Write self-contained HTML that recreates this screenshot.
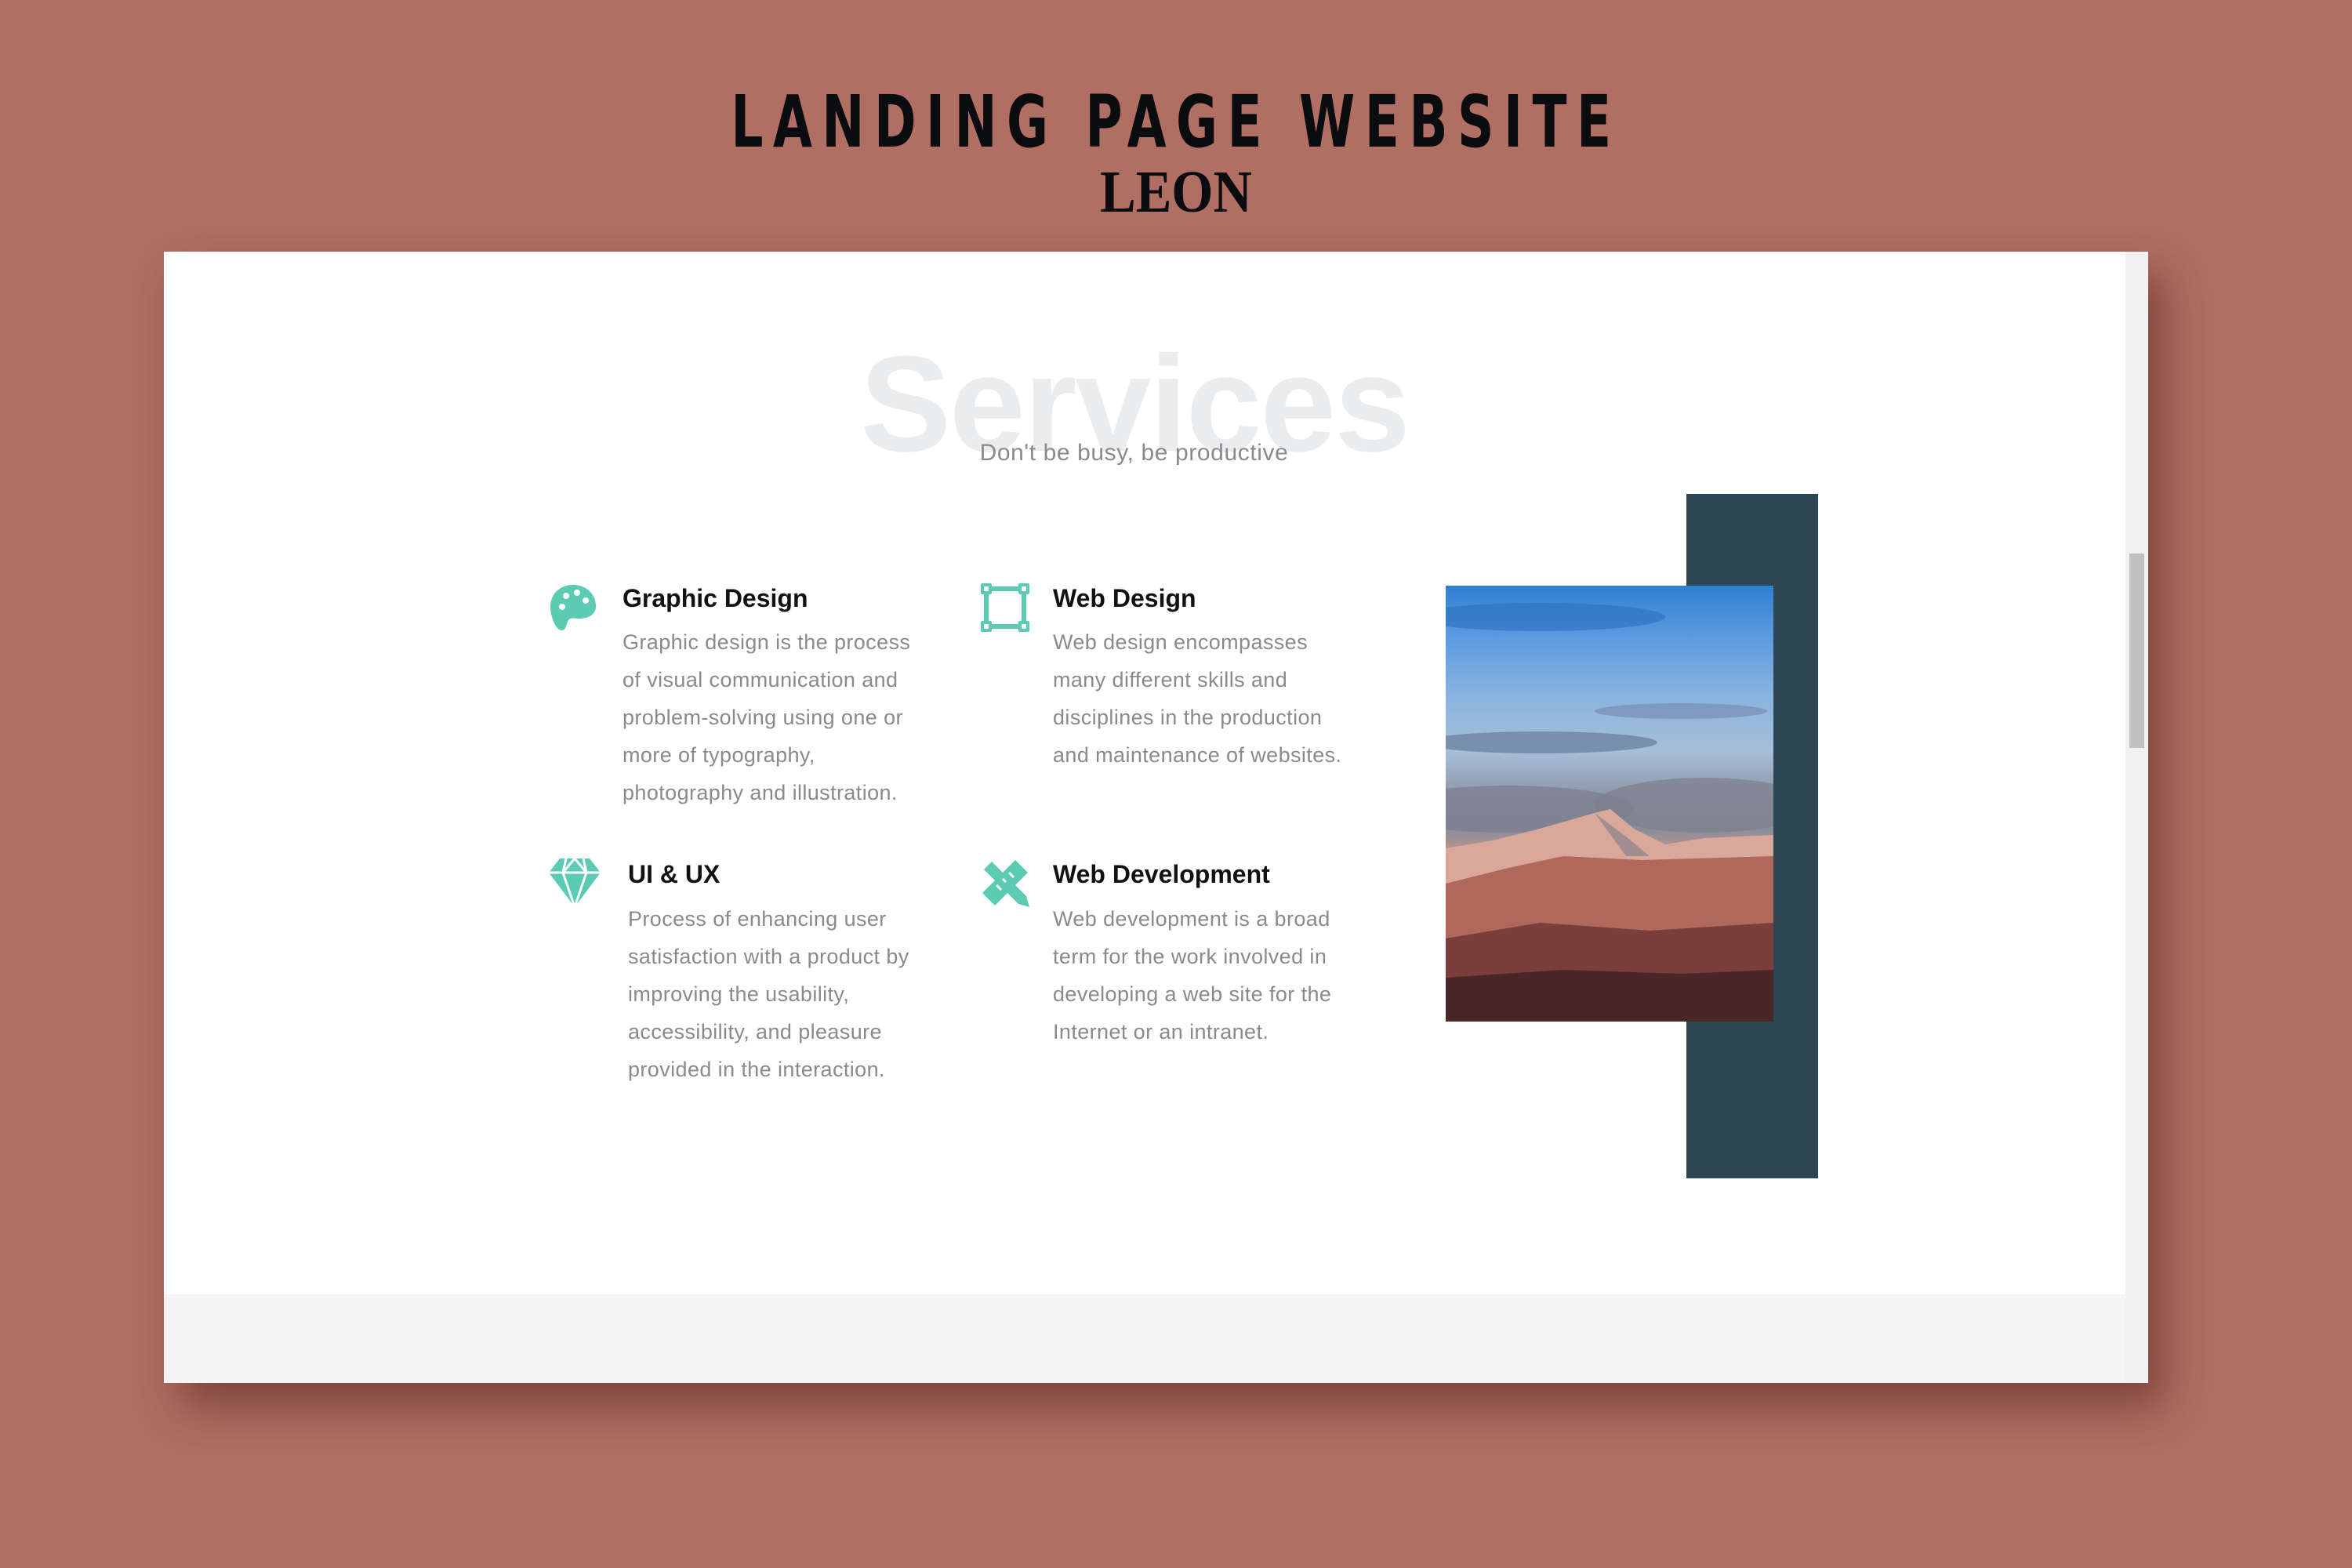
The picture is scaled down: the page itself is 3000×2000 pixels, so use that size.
<!DOCTYPE html>
<html><head><meta charset="utf-8"><style>
*{margin:0;padding:0;box-sizing:border-box}
body{width:3000px;height:2000px;background:#b16e62;position:relative;overflow:hidden;font-family:"Liberation Sans",sans-serif}
.t1{position:absolute;left:0;width:3000px;top:106px;text-align:center;font-family:"DejaVu Sans Condensed","Liberation Sans Narrow",sans-serif;font-weight:bold;font-size:92px;letter-spacing:16px;color:#0a0c10;line-height:100px;transform:scaleX(.78)}
.t2{position:absolute;left:0;width:3000px;top:205px;text-align:center;font-family:"Liberation Serif",serif;font-weight:bold;font-size:76px;color:#0a0c10;line-height:80px;transform:scaleX(.9)}
.win{position:absolute;left:209px;top:321px;width:2531px;height:1443px;background:#fff;box-shadow:20px 30px 50px rgba(60,20,15,.45);overflow:hidden}
.foot{position:absolute;left:0;top:1330px;width:2502px;height:113px;background:#f5f5f5}
.sb{position:absolute;right:0;top:0;width:29px;height:1443px;background:#f1f1f1}
.th{position:absolute;left:5px;top:385px;width:19px;height:248px;background:#c1c1c1}
.big{position:absolute;left:865px;top:104px;width:746px;text-align:center;font-weight:bold;font-size:174px;color:#ebecee;letter-spacing:-2px;line-height:180px}
.sub{position:absolute;left:880px;width:715px;top:237px;text-align:center;font-size:30px;color:#8a8a8a;line-height:40px;letter-spacing:.6px}
.dark{position:absolute;left:1942px;top:309px;width:168px;height:873px;background:#2c4654}
.img{position:absolute;left:1635px;top:426px;width:418px;height:556px;overflow:hidden;background:linear-gradient(180deg,#2f7fd0 0%,#5d9be0 12%,#89b3e0 25%,#a5bfd8 38%,#8f98aa 48%,#8a8e9c 56%,#c99487 62%,#b56f60 70%,#8e4a44 82%,#4d2628 100%)}
.h{position:absolute;font-weight:bold;font-size:32px;color:#111;line-height:40px}
.p{position:absolute;font-size:27px;color:#8a8a8a;line-height:48px;width:520px;letter-spacing:.4px}
svg.i{position:absolute}
</style></head><body>
<div class="t1">LANDING PAGE WEBSITE</div>
<div class="t2">LEON</div>
<div class="win">
  <div class="big">Services</div>
  <div class="sub">Don't be busy, be productive</div>
  <div class="dark"></div>
  <div class="img">
    <svg width="418" height="556" viewBox="0 0 418 556">
      <ellipse cx="120" cy="40" rx="160" ry="18" fill="#2a6fc0" opacity=".6"/>
      <ellipse cx="120" cy="200" rx="150" ry="14" fill="#5d6f93" opacity=".6"/>
      <ellipse cx="300" cy="160" rx="110" ry="10" fill="#6b7ea0" opacity=".5"/>
      <ellipse cx="80" cy="285" rx="160" ry="30" fill="#7a7d8e" opacity=".7"/>
      <ellipse cx="330" cy="280" rx="140" ry="35" fill="#7d7f8c" opacity=".7"/>
      <path d="M0 335 L60 325 L120 310 L190 290 L210 285 L240 310 L280 330 L330 322 L418 318 L418 556 L0 556Z" fill="#d9a89a"/>
      <path d="M190 290 L230 320 L260 345 L230 345 Z" fill="#7d7d8c" opacity=".6"/>
      <path d="M0 380 L80 360 L150 345 L250 350 L418 345 L418 556 L0 556Z" fill="#b0685a"/>
      <path d="M0 450 L120 430 L260 440 L418 430 L418 556 L0 556Z" fill="#7a3e3b"/>
      <path d="M0 500 L150 490 L300 495 L418 490 L418 556 L0 556Z" fill="#4b2628"/>
    </svg>
  </div>
  <svg class="i" style="left:491px;top:423px" width="62" height="62" viewBox="0 0 62 62"><path d="M31 2C14 2 2 14 2 30c0 14 8 30 14 30 7 0 6-9 9-13 3-4 9-2 13-2 13 0 22-5 22-16C60 14 48 2 31 2z" fill="#5ccbb4"/><circle cx="17" cy="30" r="4" fill="#fff"/><circle cx="22" cy="16" r="4" fill="#fff"/><circle cx="36" cy="12" r="4" fill="#fff"/><circle cx="47" cy="22" r="4" fill="#fff"/></svg>
  <svg class="i" style="left:1042px;top:423px" width="62" height="62" viewBox="0 0 62 62"><g fill="none" stroke="#5ccbb4" stroke-width="6"><rect x="7" y="7" width="48" height="48"/></g><g fill="#5ccbb4"><rect x="0" y="0" width="14" height="14" rx="2"/><rect x="48" y="0" width="14" height="14" rx="2"/><rect x="0" y="48" width="14" height="14" rx="2"/><rect x="48" y="48" width="14" height="14" rx="2"/></g><g fill="#fff"><rect x="4" y="4" width="6" height="6"/><rect x="52" y="4" width="6" height="6"/><rect x="4" y="52" width="6" height="6"/><rect x="52" y="52" width="6" height="6"/></g></svg>
  <svg class="i" style="left:491px;top:774px" width="66" height="62" viewBox="0 0 66 62"><path d="M14 0H52L66 18L33 62L0 18Z" fill="#5ccbb4"/><path d="M0 18H66M22 0L18 18L33 62M44 0L48 18L33 62M18 18L33 0L48 18" stroke="#fff" stroke-width="3" fill="none"/></svg>
  <svg class="i" style="left:1042px;top:774px" width="62" height="62" viewBox="0 0 62 62"><g fill="#5ccbb4"><path d="M4 14L14 4L58 48L62 62L48 58Z"/><path d="M44 2L60 18L18 60L2 44Z"/></g><g stroke="#fff" stroke-width="3"><path d="M36 18L42 24M28 26L32 30M20 34L26 40"/></g></svg>
  <div class="h" style="left:585px;top:422px">Graphic Design</div>
  <div class="p" style="left:585px;top:474px">Graphic design is the process<br>of visual communication and<br>problem-solving using one or<br>more of typography,<br>photography and illustration.</div>
  <div class="h" style="left:1134px;top:422px">Web Design</div>
  <div class="p" style="left:1134px;top:474px">Web design encompasses<br>many different skills and<br>disciplines in the production<br>and maintenance of websites.</div>
  <div class="h" style="left:592px;top:774px">UI &amp; UX</div>
  <div class="p" style="left:592px;top:827px">Process of enhancing user<br>satisfaction with a product by<br>improving the usability,<br>accessibility, and pleasure<br>provided in the interaction.</div>
  <div class="h" style="left:1134px;top:774px">Web Development</div>
  <div class="p" style="left:1134px;top:827px">Web development is a broad<br>term for the work involved in<br>developing a web site for the<br>Internet or an intranet.</div>
  <div class="foot"></div>
  <div class="sb"><div class="th"></div></div>
</div>
</body></html>
